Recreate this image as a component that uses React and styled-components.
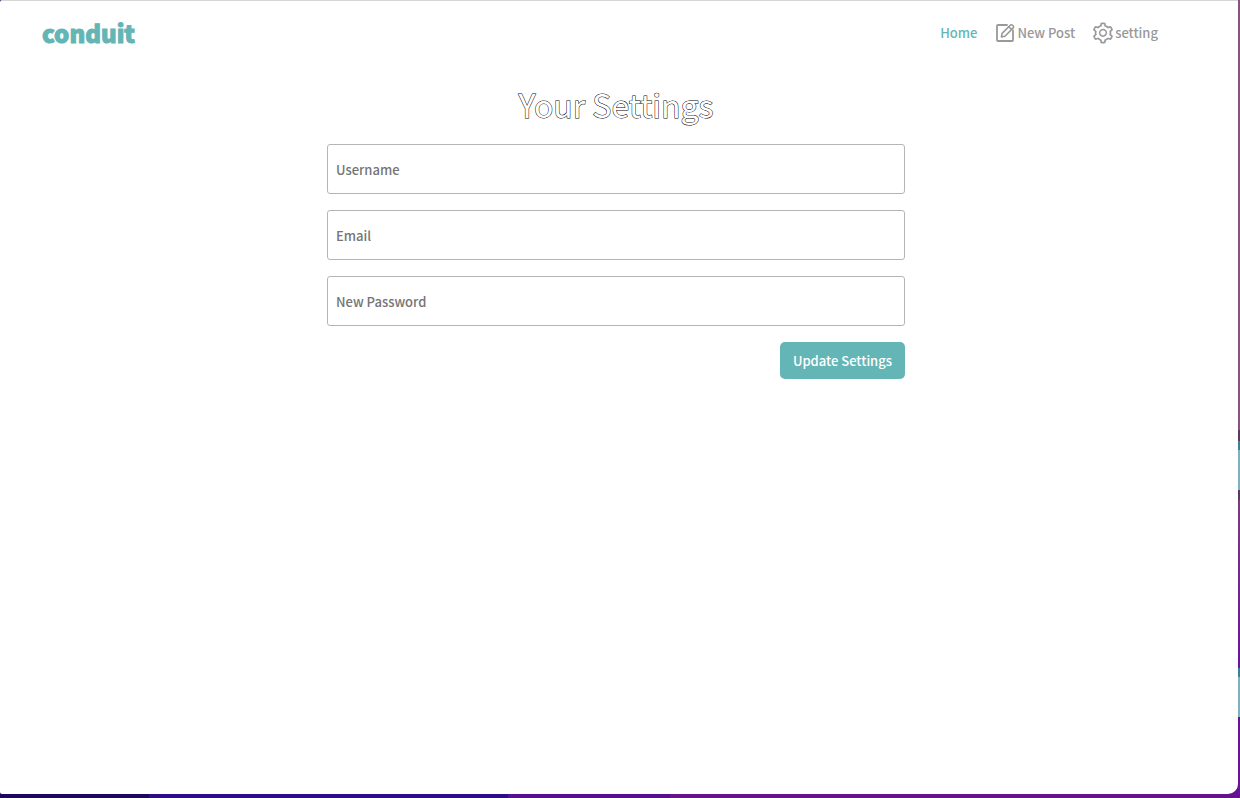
import React from 'react';
import styled, { createGlobalStyle } from 'styled-components';
import { AiOutlineSetting } from 'react-icons/ai';

const Global = createGlobalStyle`
  * { box-sizing: border-box; }
  body {
    margin: 0;
    background: linear-gradient(90deg, #210563 0 12%, #310b85 12% 41%, #550f91 41% 54%, #67128f 54% 100%);
    font-family: "Noto Sans CJK SC", "Noto Sans", sans-serif;
    font-size: 13px;
    font-weight: 500;
    line-height: 20px;
  }
  input, button { font: inherit; }
`;

const Desktop = styled.div`
  min-height: 100vh;
  display: flex;
  flex-direction: column;
  padding-bottom: 4px;
`;

const Body = styled.div`
  flex: 1;
  display: flex;
`;

const Page = styled.div`
  flex: 1;
  background: #fff;
  border-top: 1px solid #d6d6d6;
  border-radius: 2px 0 10px 2px;
`;

const Edge = styled.div`
  width: 2px;
  background: linear-gradient(#8a5080 0 430px, #5b3a60 430px 441px, #3f7f93 441px 450px, #7fb0bf 450px 490px, #5b3a60 490px 500px, #7d3a80 500px, #6a129a 668px, #3f7f93 668px 677px, #7fb0bf 677px 717px, #6a129a 717px);
`;

const Header = styled.header`
  display: flex;
  align-items: center;
  justify-content: space-between;
  height: 64px;
  padding: 0 80px 0 42px;
`;

const Logo = styled.a`
  color: #64b5b6;
  font-size: 24px;
  line-height: 32px;
  font-weight: 900;
  -webkit-text-stroke: 1px #64b5b6;
  text-decoration: none;
`;

const Nav = styled.nav`
  display: flex;
  align-items: center;
  gap: 16px;
`;

const NavLink = styled.a`
  display: flex;
  align-items: center;
  color: ${(p) => (p.$active ? '#64b5b6' : '#999')};
  text-decoration: none;

  svg { width: 24px; height: 24px; }
`;

const Main = styled.main`
  padding-right: 6px;
`;

const Form = styled.form`
  display: flex;
  flex-direction: column;
  gap: 16px;
  width: 578px;
  max-width: 100%;
  margin: 15px auto 0;
`;

const Title = styled.h1`
  margin: 0;
  font-size: 32px;
  line-height: 48px;
  font-weight: 400;
  text-align: center;
  color: #fff;
  -webkit-text-stroke: 1px #000;
  paint-order: stroke fill;
`;

const Field = styled.input`
  height: 50px;
  padding: 0 8px;
  border: 1px solid #b5b5b5;
  border-radius: 3px;
  background: #fff;
  color: #333;
  &::placeholder { color: #757575; opacity: 1; }
`;

const Submit = styled.button`
  align-self: flex-end;
  height: 37px;
  padding: 0 13px;
  border: 0;
  border-radius: 5px;
  background: #64b5b6;
  color: #fff;
`;

function ComposeIcon() {
  return (
    <svg viewBox="0 0 24 24" fill="none" stroke="currentColor" strokeLinecap="round" strokeLinejoin="round" aria-hidden="true">
      <path strokeWidth="1.8" d="M14 4H5a1 1 0 0 0-1 1v14a1 1 0 0 0 1 1h14a1 1 0 0 0 1-1v-9.500" />
      <path strokeWidth="1.6" d="M8.400 15.900l.7-3.500 8.100-8.100a1.600 1.600 0 0 1 2.300 0l.5.5a1.600 1.600 0 0 1 0 2.300l-8.100 8.100zM15.800 5.700l2.800 2.800" />
    </svg>
  );
}

export default function App() {
  return (
    <Desktop>
      <Global />
      <Body>
        <Page>
          <Header>
            <Logo href="#">conduit</Logo>
            <Nav>
              <NavLink href="#" $active>Home</NavLink>
              <NavLink href="#"><ComposeIcon />New Post</NavLink>
              <NavLink href="#"><AiOutlineSetting />setting</NavLink>
            </Nav>
          </Header>
          <Main>
            <Form>
              <Title>Your Settings</Title>
              <Field type="text" placeholder="Username" aria-label="Username" />
              <Field type="email" placeholder="Email" aria-label="Email" />
              <Field type="password" placeholder="New Password" aria-label="New Password" />
              <Submit type="button">Update Settings</Submit>
            </Form>
          </Main>
        </Page>
        <Edge />
      </Body>
    </Desktop>
  );
}
